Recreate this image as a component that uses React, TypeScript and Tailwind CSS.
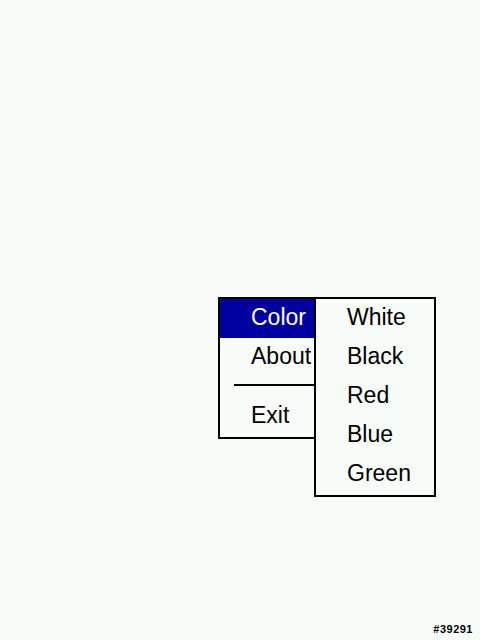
export default function App() {
  return (
    <div className="relative w-[480px] h-[640px] overflow-hidden bg-[#f7fcf9] font-['Liberation_Sans',Arial,sans-serif] text-black">
      {/* main popup menu */}
      <div className="absolute left-[218px] top-[297px] w-[100px] h-[142px] border-2 border-black bg-[#f7fcf9] text-[23px]">
        <div className="h-[39px] leading-[36px] pl-[31px] bg-[#0000a0] text-white">Color</div>
        <div className="h-[39px] leading-[36px] pl-[31px]">About</div>
        <div className="h-[20px] pt-[7px] pl-[14px]">
          <div className="h-[2px] bg-black" />
        </div>
        <div className="h-[39px] leading-[36px] pl-[31px]">Exit</div>
      </div>

      {/* Color submenu */}
      <div className="absolute left-[314px] top-[297px] w-[122px] h-[200px] border-2 border-black bg-[#f7fcf9] text-[23px]">
        {['White', 'Black', 'Red', 'Blue', 'Green'].map(c => (
          <div key={c} className="h-[39px] leading-[36px] pl-[31px]">{c}</div>
        ))}
      </div>

      <div className="absolute right-[7px] bottom-[5px] text-[11px] font-bold leading-none tracking-[0.5px] text-black [text-shadow:1px_0_0_#fff,-1px_0_0_#fff,0_1px_0_#fff,0_-1px_0_#fff]">
        #39291
      </div>
    </div>
  )
}
